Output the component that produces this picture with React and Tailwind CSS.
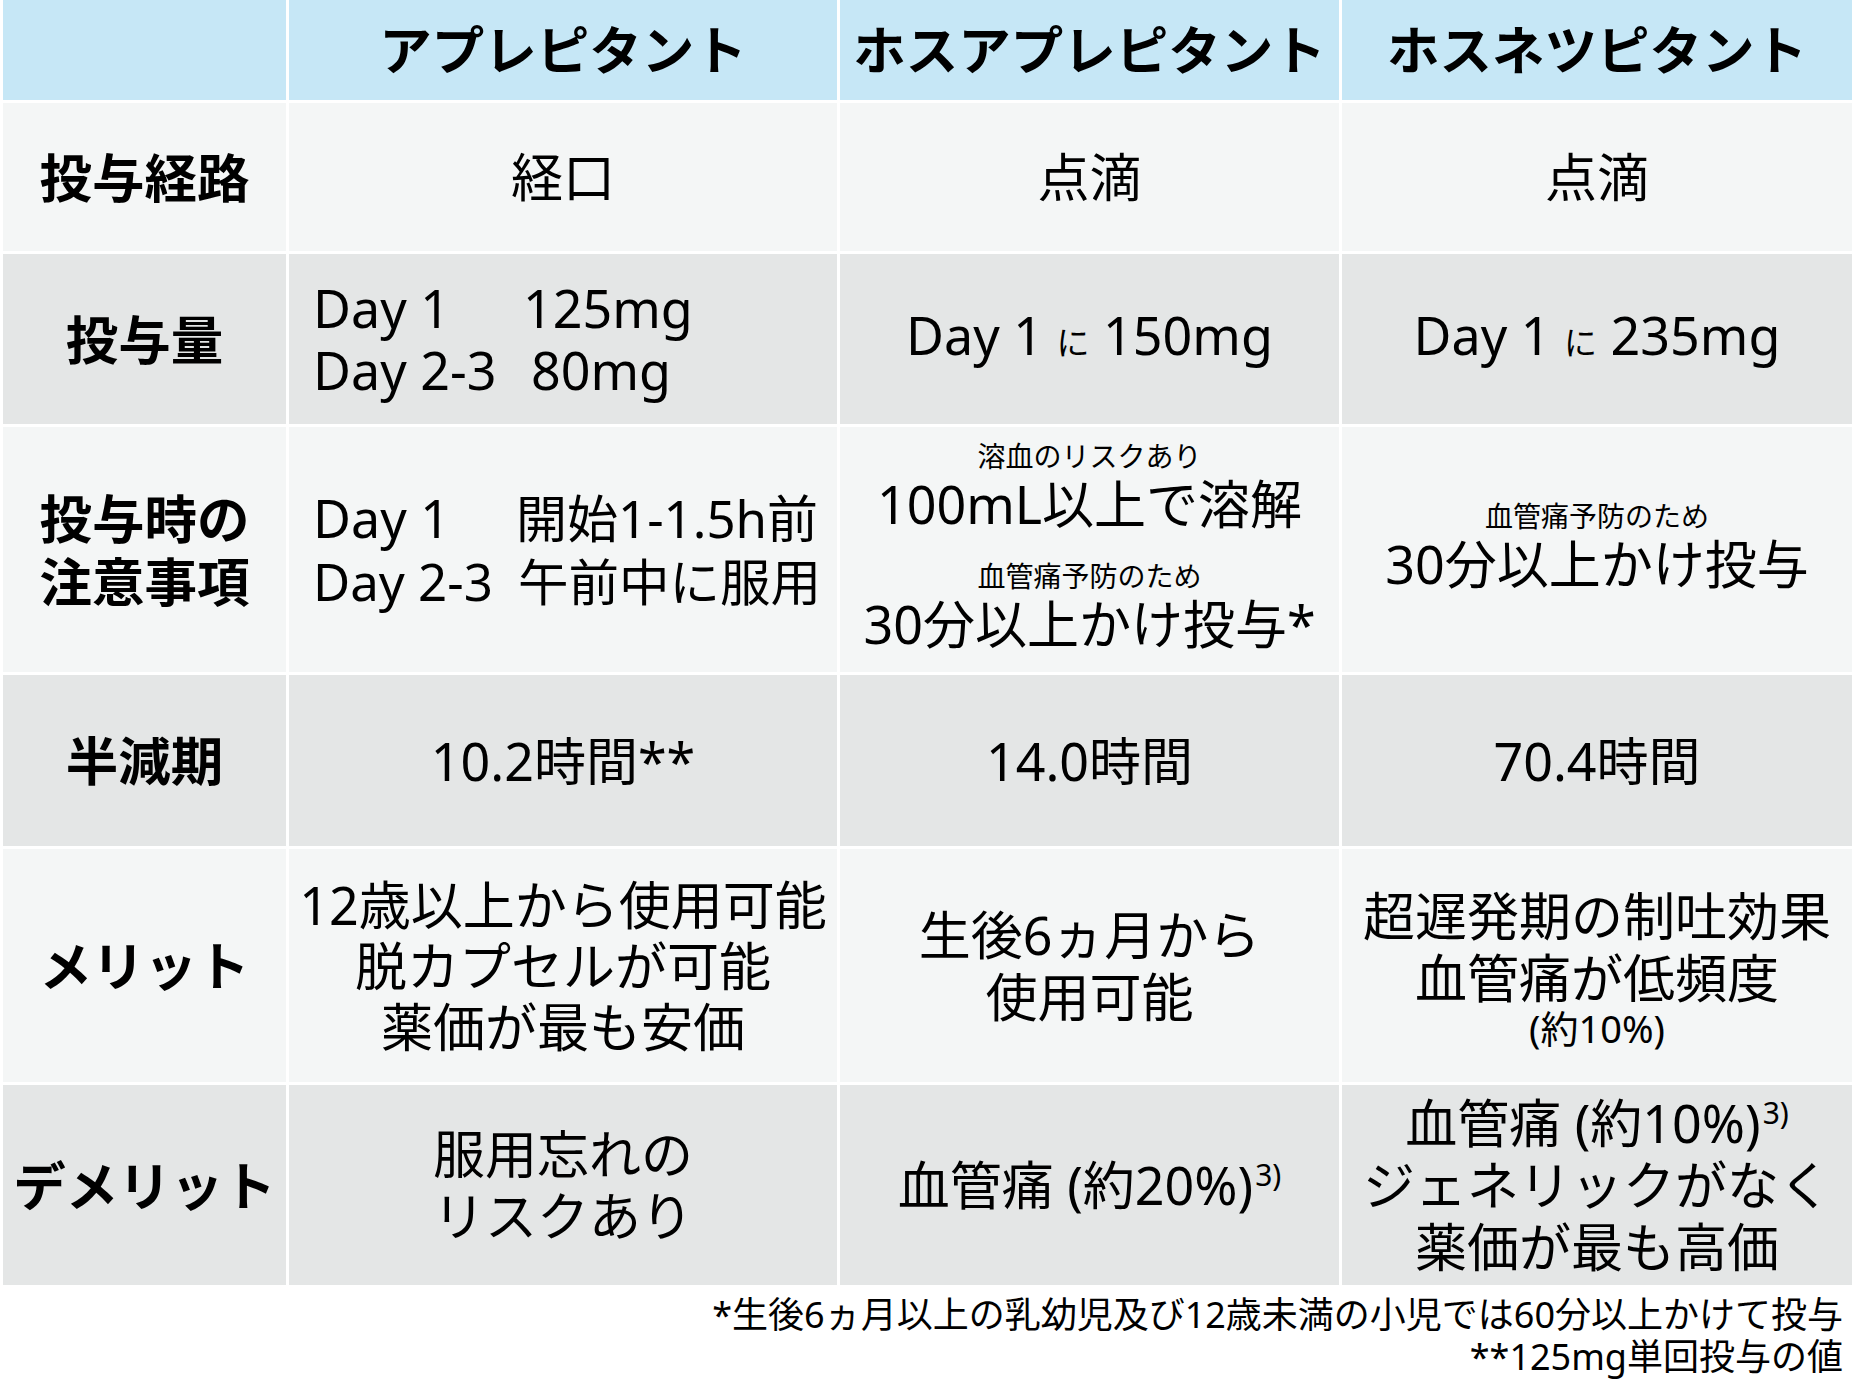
const F = "font-['Noto_Sans','Noto_Sans_CJK_JP',sans-serif]";

const HEAD = "bg-[#c6e7f6]";
const LIGHT = "bg-[#f4f6f6]";
const DARK = "bg-[#e4e6e6]";

function Cell({ bg, children, className = "" }) {
  return (
    <div className={`${bg} flex flex-col items-center justify-center text-center ${className}`}>
      {children}
    </div>
  );
}

function Label({ bg, children }) {
  return (
    <Cell bg={bg} className="font-bold text-[52.5px] leading-[63px]">
      {children}
    </Cell>
  );
}

function Sup() {
  return <span className="relative -top-[19px] text-[30px] leading-none ml-[2px]">3)</span>;
}

export default function App() {
  return (
    <div className={`w-[1852px] h-[1384px] bg-white text-black ${F}`}>
      <div className="grid grid-cols-[283px_548px_499px_510px] grid-rows-[100px_148px_170px_245px_171px_233px_200px] gap-[3px] pl-[3px] bg-white text-[52px] leading-[62px]">
        {/* header */}
        <Cell bg={HEAD} />
        <Cell bg={HEAD} className="font-bold text-[52.5px]">アプレピタント</Cell>
        <Cell bg={HEAD} className="font-bold text-[52.5px]">ホスアプレピタント</Cell>
        <Cell bg={HEAD} className="font-bold text-[52.5px]">ホスネツピタント</Cell>

        {/* 投与経路 */}
        <Label bg={LIGHT}>投与経路</Label>
        <Cell bg={LIGHT}>経口</Cell>
        <Cell bg={LIGHT}>点滴</Cell>
        <Cell bg={LIGHT}>点滴</Cell>

        {/* 投与量 */}
        <Label bg={DARK}>投与量</Label>
        <div className={`${DARK} flex flex-col justify-center pl-[24px] leading-[62px]`}>
          <div className="flex"><span className="w-[210px]">Day 1</span><span>125mg</span></div>
          <div className="flex"><span className="w-[218px]">Day 2-3</span><span>80mg</span></div>
        </div>
        <Cell bg={DARK}>
          <div>Day 1 <span className="text-[33px]">に</span> 150mg</div>
        </Cell>
        <Cell bg={DARK}>
          <div>Day 1 <span className="text-[33px]">に</span> 235mg</div>
        </Cell>

        {/* 投与時の注意事項 */}
        <Label bg={LIGHT}>
          <div>投与時の</div>
          <div>注意事項</div>
        </Label>
        <div className={`${LIGHT} flex flex-col justify-center pl-[24px] leading-[63px]`}>
          <div className="flex items-baseline"><span className="w-[203px]">Day 1</span><span className="text-[51px]">開始1-1.5h前</span></div>
          <div className="flex items-baseline"><span className="w-[205px] text-[51px]">Day 2-3</span><span className="text-[50.5px]">午前中に服用</span></div>
        </div>
        <Cell bg={LIGHT}>
          <div className="-mt-[6px] flex flex-col items-center">
            <div className="text-[28px] leading-[34px]">溶血のリスクあり</div>
            <div className="leading-[62px]">100mL以上で溶解</div>
            <div className="text-[28px] leading-[34px] mt-[24px]">血管痛予防のため</div>
            <div className="leading-[62px]">30分以上かけ投与*</div>
          </div>
        </Cell>
        <Cell bg={LIGHT}>
          <div className="-mt-[6px] flex flex-col items-center">
            <div className="text-[28px] leading-[34px]">血管痛予防のため</div>
            <div className="leading-[62px]">30分以上かけ投与</div>
          </div>
        </Cell>

        {/* 半減期 */}
        <Label bg={DARK}>半減期</Label>
        <Cell bg={DARK}>10.2時間**</Cell>
        <Cell bg={DARK}>14.0時間</Cell>
        <Cell bg={DARK}>70.4時間</Cell>

        {/* メリット */}
        <Label bg={LIGHT}>メリット</Label>
        <Cell bg={LIGHT} className="leading-[61px]">
          <div>12歳以上から使用可能</div>
          <div>脱カプセルが可能</div>
          <div>薬価が最も安価</div>
        </Cell>
        <Cell bg={LIGHT} className="leading-[62px]">
          <div>生後6ヵ月から</div>
          <div>使用可能</div>
        </Cell>
        <Cell bg={LIGHT}>
          <div className="leading-[62px]">超遅発期の制吐効果</div>
          <div className="leading-[62px]">血管痛が低頻度</div>
          <div className="text-[38px] leading-[38px]">(約10%)</div>
        </Cell>

        {/* デメリット */}
        <Label bg={DARK}>デメリット</Label>
        <Cell bg={DARK} className="leading-[62px]">
          <div>服用忘れの</div>
          <div>リスクあり</div>
        </Cell>
        <Cell bg={DARK}>
          <div>血管痛 (約20%)<Sup /></div>
        </Cell>
        <Cell bg={DARK} className="leading-[62px]">
          <div>血管痛 (約10%)<Sup /></div>
          <div>ジェネリックがなく</div>
          <div>薬価が最も高価</div>
        </Cell>
      </div>

      <div className="text-right pr-[9px] pt-[9px] text-[36px] leading-[42px]">
        <div>*生後6ヵ月以上の乳幼児及び12歳未満の小児では60分以上かけて投与</div>
        <div>**125mg単回投与の値</div>
      </div>
    </div>
  );
}
